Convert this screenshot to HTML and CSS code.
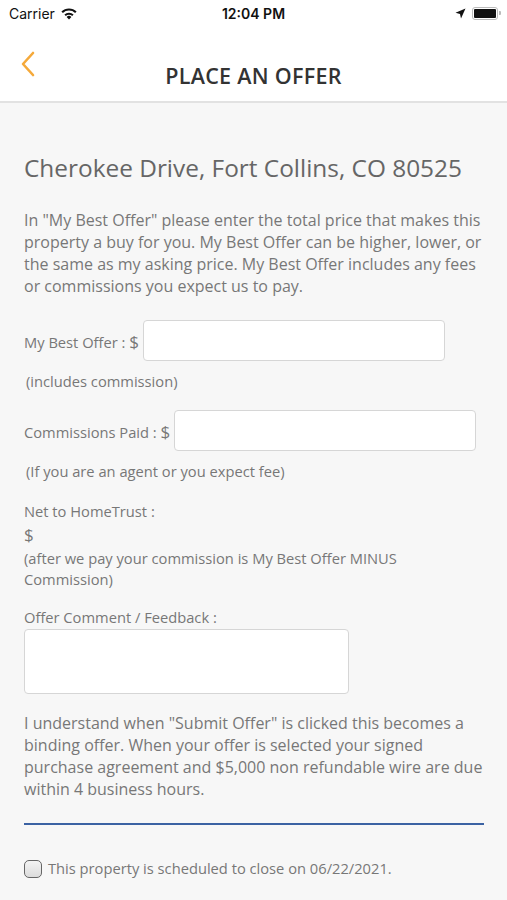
FILE: index.html
```html
<!DOCTYPE html>
<html lang="en">
<head>
    <meta charset="UTF-8">
    <meta name="viewport" content="width=device-width, initial-scale=1.0">
    <title>Place an Offer</title>
    <link rel="stylesheet" href="styles.css">
</head>
<body>
    <div class="status-bar">
        <div class="status-left">
            <span>Carrier</span>
            <svg class="wifi" width="18" height="13" viewBox="0 0 18 13">
                <path d="M9 12.5 L6.6 9.9 A3.4 3.4 0 0 1 11.4 9.9 Z" fill="#111"/>
                <path d="M4.4 7.6 A6.6 6.6 0 0 1 13.6 7.6 L12.2 9.1 A4.6 4.6 0 0 0 5.8 9.1 Z" fill="#111"/>
                <path d="M1.4 4.6 A10.8 10.8 0 0 1 16.6 4.6 L15.1 6.1 A8.7 8.7 0 0 0 2.9 6.1 Z" fill="#111"/>
            </svg>
        </div>
        <div class="status-time">12:04 PM</div>
        <div class="status-right">
            <svg width="11" height="11" viewBox="0 0 11 11">
                <path d="M10.5 0.5 L0.5 4.8 L5 5.9 L6 10.5 Z" fill="#111"/>
            </svg>
            <div class="battery"><div class="battery-fill"></div></div>
        </div>
    </div>

    <header class="nav">
        <a href="#" class="back">
            <svg width="16" height="26" viewBox="0 0 16 26">
                <path d="M13 2 L3 13 L13 24" fill="none" stroke="#f5a93a" stroke-width="2.6" stroke-linecap="round" stroke-linejoin="round"/>
            </svg>
        </a>
        <div class="nav-title">PLACE AN OFFER</div>
    </header>

    <main class="content">
        <h1 class="address">Cherokee Drive, Fort Collins, CO 80525</h1>

        <p class="intro">In "My Best Offer" please enter the total price that makes this property a buy for you. My Best Offer can be higher, lower, or the same as my asking price. My Best Offer includes any fees or commissions you expect us to pay.</p>

        <div class="field-row first">
            <label>My Best Offer : <span class="dollar">$</span></label>
            <input type="text" class="money-input">
        </div>
        <div class="hint">(includes commission)</div>

        <div class="field-row second">
            <label>Commissions Paid : <span class="dollar">$</span></label>
            <input type="text" class="money-input">
        </div>
        <div class="hint">(If you are an agent or you expect fee)</div>

        <div class="net">
            <div class="net-label">Net to HomeTrust :</div>
            <div class="dollar net-value">$</div>
            <div class="net-note">(after we pay your commission is My Best Offer MINUS Commission)</div>
        </div>

        <div class="comment">
            <div class="comment-label">Offer Comment / Feedback :</div>
            <textarea class="comment-box"></textarea>
        </div>

        <p class="terms">I understand when "Submit Offer" is clicked this becomes a binding offer. When your offer is selected your signed purchase agreement and $5,000 non refundable wire are due within 4 business hours.</p>

        <hr class="divider">

        <label class="check-row">
            <span class="checkbox"></span>
            <span>This property is scheduled to close on 06/22/2021.</span>
        </label>
    </main>
</body>
</html>
```

FILE: styles.css
```css
body {
    margin: 0;
    padding: 0;
    font-family: "Open Sans", Arial, sans-serif;
    background-color: #f7f7f7;
    color: #777;
    width: 507px;
    height: 900px;
    overflow: hidden;
}

/* Status bar */
.status-bar {
    height: 28px;
    display: flex;
    align-items: center;
    justify-content: space-between;
    padding: 0 9px;
    background-color: #fff;
    font-family: Inter, "Liberation Sans", sans-serif;
    font-size: 14px;
    color: #111;
    position: relative;
}

.status-left {
    display: flex;
    align-items: center;
    gap: 5px;
    margin-top: -1px;
}

.status-time {
    position: absolute;
    left: 0;
    right: 0;
    text-align: center;
    font-weight: 600;
    margin-top: -1px;
}

.status-right {
    display: flex;
    align-items: center;
    gap: 6px;
    margin-top: -1px;
}

.battery {
    width: 22px;
    height: 9px;
    border: 1.5px solid #bbb;
    border-radius: 3px;
    padding: 1px;
    position: relative;
}

.battery::after {
    content: "";
    position: absolute;
    right: -4px;
    top: 3px;
    width: 2px;
    height: 4px;
    background: #bbb;
    border-radius: 0 1px 1px 0;
}

.battery-fill {
    width: 100%;
    height: 100%;
    background: #111;
    border-radius: 1px;
}

/* Nav bar */
.nav {
    height: 73px;
    background-color: #fff;
    border-bottom: 2px solid #e2e2e2;
    position: relative;
    display: flex;
    align-items: center;
    justify-content: center;
}

.nav .back {
    position: absolute;
    left: 20px;
    top: 23px;
    display: block;
}

.nav-title {
    font-family: "Open Sans", Arial, sans-serif;
    font-size: 21.5px;
    font-weight: 600;
    color: #333;
    margin-top: 22px;
    letter-spacing: 0.3px;
}

/* Content */
.content {
    padding: 0 23px 0 24px;
}

.address {
    margin: 47px 0 0;
    font-size: 24.4px;
    font-weight: 400;
    color: #666;
    line-height: 36px;
}

.intro,
.terms {
    margin: 0;
    font-size: 16px;
    line-height: 22px;
    color: #777;
}

.intro {
    margin-top: 23px;
}

.field-row {
    display: flex;
    align-items: center;
    font-size: 14.7px;
    color: #777;
}

.field-row label {
    margin-top: 2px;
    padding-right: 4px;
}

.field-row.first {
    margin-top: 23px;
}

.field-row.second {
    margin-top: 19px;
}

.dollar {
    font-size: 17px;
    color: #777;
}

.money-input {
    width: 302px;
    height: 41px;
    box-sizing: border-box;
    border: 1.5px solid #d6d6d6;
    border-radius: 4px;
    background: #fff;
    margin: 0;
    padding: 0 8px;
    font-family: inherit;
}

.hint {
    font-size: 14.7px;
    color: #777;
    margin-top: 10px;
    padding-left: 2px;
    line-height: 20px;
}

.net {
    margin-top: 20px;
    font-size: 14.7px;
    line-height: 21px;
}

.net-value {
    line-height: 24px;
    margin: 1px 0 1px;
}

.net-note {
    padding-right: 40px;
}

.comment {
    margin-top: 16px;
    font-size: 14.7px;
}

.comment-label {
    line-height: 22px;
}

.comment-box {
    display: block;
    width: 325px;
    height: 65px;
    box-sizing: border-box;
    border: 1.5px solid #d6d6d6;
    border-radius: 4px;
    background: #fff;
    margin: 1px 0 0;
    resize: none;
}

.terms {
    margin-top: 18px;
}

.divider {
    border: 0;
    height: 2px;
    background: #3b62a3;
    margin: 23px 0 0;
}

.check-row {
    display: flex;
    align-items: center;
    gap: 6px;
    margin-top: 32px;
    font-size: 14.7px;
    color: #777;
}

.checkbox {
    width: 16px;
    height: 16px;
    border: 1.5px solid #666;
    border-radius: 5px;
    background: linear-gradient(#f4f4f4, #dcdcdc);
    margin-top: 3px;
}
```
